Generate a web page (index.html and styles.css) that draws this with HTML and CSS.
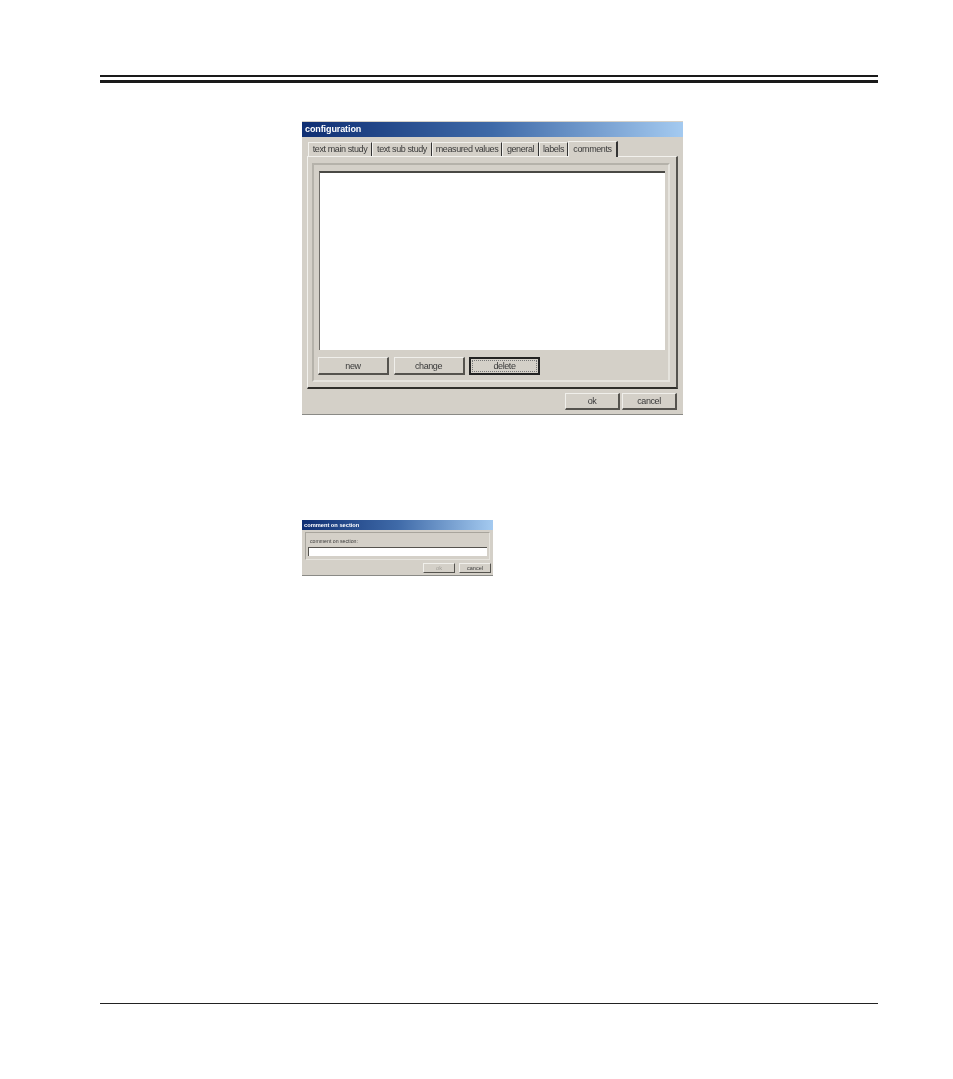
FILE: index.html
```html
<!DOCTYPE html>
<html lang="en">
<head>
  <meta charset="UTF-8" />
  <title>configuration</title>
  <link rel="stylesheet" href="styles.css">
</head>
<body>
  <div class="page">
    <div class="rule-thin"></div>
    <div class="rule-thick"></div>

    <div class="dialog config">
      <div class="titlebar">configuration</div>
      <div class="tabs">
        <div class="tab t1">text main study</div>
        <div class="tab t2">text sub study</div>
        <div class="tab t3">measured values</div>
        <div class="tab t4">general</div>
        <div class="tab t5">labels</div>
        <div class="tab active">comments</div>
      </div>
      <div class="panel">
        <div class="group">
          <div class="listbox"></div>
          <div class="list-buttons">
            <button class="btn wide">new</button>
            <button class="btn wide">change</button>
            <button class="btn wide default"><span>delete</span></button>
          </div>
        </div>
      </div>
      <div class="dialog-buttons">
        <button class="btn ok">ok</button>
        <button class="btn ok">cancel</button>
      </div>
    </div>

    <div class="dialog comment">
      <div class="titlebar small">comment on section</div>
      <div class="small-group">
        <div class="small-label">comment on section:</div>
        <div class="small-input"></div>
      </div>
      <div class="small-buttons">
        <button class="btn tiny disabled">ok</button>
        <button class="btn tiny">cancel</button>
      </div>
    </div>

    <div class="footer-rule"></div>
  </div>
</body>
</html>
```

FILE: styles.css
```css
body {
  margin: 0;
  background-color: #ffffff;
  font-family: "Liberation Sans", Arial, sans-serif;
}
.page {
  width: 778px;
  height: 1079px;
  margin-left: 100px;
  padding-top: 75px;
  box-sizing: border-box;
}
.rule-thin {
  height: 2px;
  background-color: #1a1a1a;
}
.rule-thick {
  height: 3px;
  margin-top: 3px;
  background-color: #1a1a1a;
}
.dialog {
  margin-left: 202px;
  background-color: #d4d0c8;
  box-sizing: border-box;
  color: #3a3a3a;
  filter: blur(0.35px);
}
.config {
  width: 381px;
  height: 294px;
  margin-top: 38px;
  padding-top: 1px;
  border-bottom: 1px solid #8a8a86;
}
.titlebar {
  height: 15px;
  padding-left: 3px;
  background: linear-gradient(to right, #0f2f73, #3f6aa8 50%, #a4caf0);
  color: #fff;
  font-size: 9px;
  font-weight: bold;
  letter-spacing: -0.1px;
  line-height: 15px;
}
.tabs {
  display: flex;
  height: 14px;
  margin-top: 5px;
  padding-left: 6px;
  font-size: 9px;
  line-height: 13px;
}
.tab {
  box-sizing: border-box;
  border-top: 1px solid #f2f1ed;
  border-left: 1px solid #f2f1ed;
  border-right: 1px solid #333;
  text-align: center;
  white-space: nowrap;
  letter-spacing: -0.4px;
}
.t1 { width: 64px; }
.t2 { width: 60px; }
.t3 { width: 70px; }
.t4 { width: 37px; }
.t5 { width: 29px; }
.tab.active {
  width: 50px;
  height: 16px;
  margin-top: -1px;
  background-color: #d4d0c8;
  border-right-width: 2px;
  line-height: 15px;
  position: relative;
}
.panel {
  width: 371px;
  height: 233px;
  margin-left: 5px;
  padding: 6px 6px 5px 4px;
  box-sizing: border-box;
  border-top: 1px solid #f2f1ed;
  border-left: 1px solid #f2f1ed;
  border-right: 2px solid #55534e;
  border-bottom: 2px solid #2f2e2a;
}
.group {
  height: 100%;
  box-sizing: border-box;
  padding: 6px 4px 0 5px;
  border: 2px solid #b5b2aa;
  border-right-color: #e6e4de;
  border-bottom-color: #e6e4de;
}
.listbox {
  width: 346px;
  height: 179px;
  box-sizing: border-box;
  background-color: #ffffff;
  border-top: 2px solid #4a4945;
  border-left: 1px solid #6f6d68;
}
.list-buttons {
  display: flex;
  gap: 4.5px;
  margin-top: 7px;
  margin-left: -1px;
}
.btn {
  display: block;
  padding: 0;
  box-sizing: border-box;
  background-color: #d4d0c8;
  font-family: inherit;
  color: #3a3a3a;
  letter-spacing: -0.4px;
  border: 1px solid #f0efeb;
  border-right: 2px solid #55534e;
  border-bottom: 2px solid #55534e;
}
.wide {
  width: 71px;
  height: 18px;
  font-size: 9px;
}
.wide.default {
  border: 2px solid #222;
  padding: 1px;
}
.wide.default span {
  display: block;
  border: 1px dotted #777;
  line-height: 10px;
}
.dialog-buttons {
  display: flex;
  justify-content: flex-end;
  gap: 2px;
  margin-top: 4px;
  padding-right: 6px;
}
.ok {
  width: 55px;
  height: 17px;
  font-size: 9px;
}
.comment {
  width: 191px;
  height: 56px;
  margin-top: 105px;
  border-bottom: 1px solid #8a8a86;
}
.titlebar.small {
  height: 10px;
  padding-left: 2px;
  font-size: 5.7px;
  letter-spacing: 0;
  line-height: 10px;
}
.small-group {
  height: 28px;
  margin: 2px 3px 0;
  padding: 4px 2px 0;
  box-sizing: border-box;
  border: 1px solid #e6e4de;
  border-top-color: #a8a59d;
  border-left-color: #a8a59d;
}
.small-label {
  height: 10px;
  padding-left: 2px;
  font-size: 5.2px;
  line-height: 9px;
}
.small-input {
  height: 9px;
  box-sizing: border-box;
  background-color: #ffffff;
  border-top: 1px solid #55534e;
  border-left: 1px solid #55534e;
}
.small-buttons {
  display: flex;
  justify-content: flex-end;
  gap: 4px;
  margin-top: 3px;
  padding-right: 2px;
}
.tiny {
  width: 32px;
  height: 10px;
  font-size: 5.5px;
  line-height: 7px;
  letter-spacing: 0;
  border-right-width: 1px;
  border-bottom-width: 1px;
}
.tiny.disabled {
  color: #a09e98;
}
.footer-rule {
  height: 1px;
  margin-top: 427px;
  background-color: #222;
}
```
